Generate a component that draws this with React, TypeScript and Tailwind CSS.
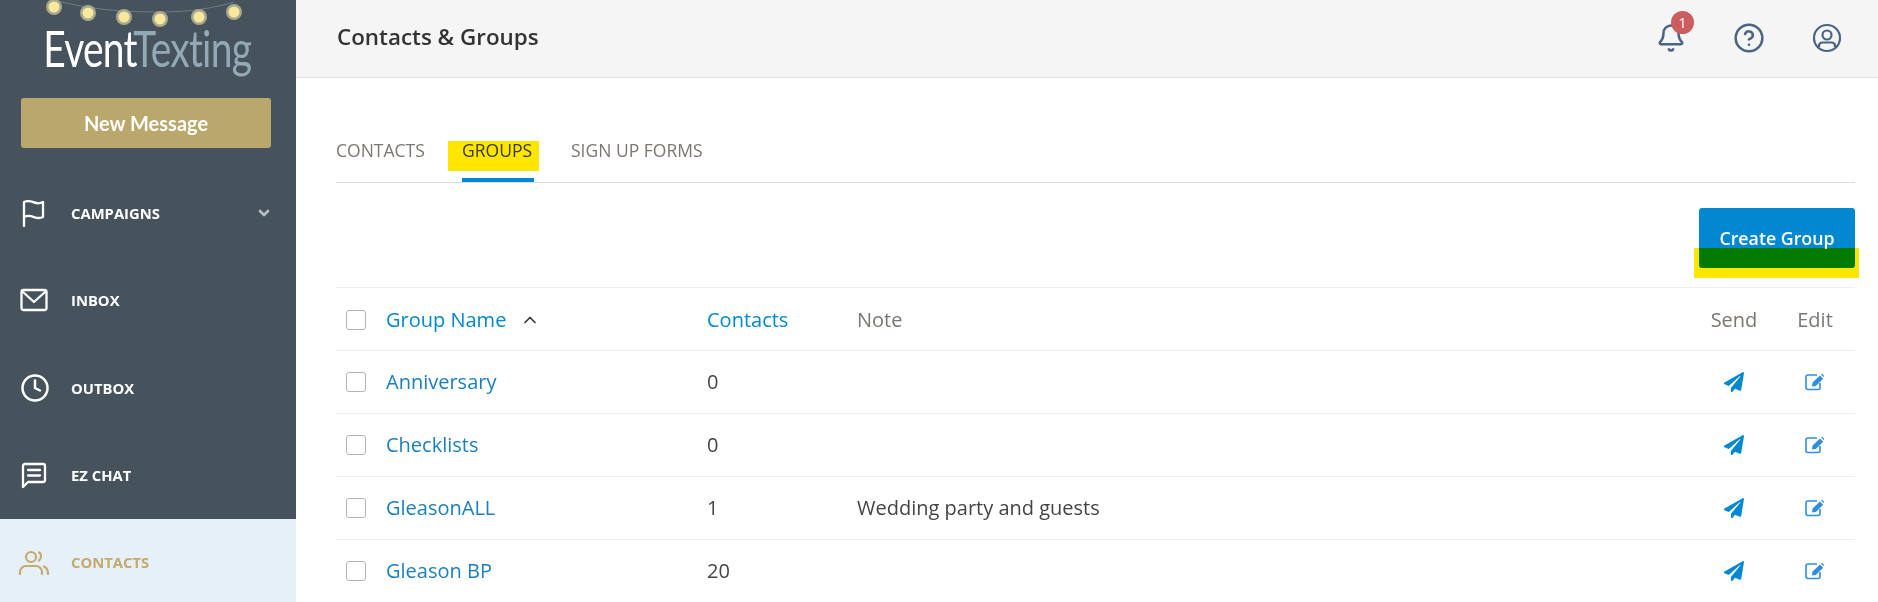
import React from 'react'
import { Bell, ChevronDown, ChevronUp, CircleHelp, Clock } from 'lucide-react'
import { FaPaperPlane } from 'react-icons/fa'

const openSans = { fontFamily: '"Open Sans", sans-serif' }

const FlagIcon = () => (
  <svg width="28" height="28" viewBox="0 0 28 28" fill="none" stroke="currentColor" strokeWidth="2.300" strokeLinecap="round" strokeLinejoin="round">
    <path d="M4 27V3c3-1.600 6-1.200 10 .4 3 1.200 6 1.400 9-.4v15c-3 1.400-6 1.300-9 .1-4-1.600-7-1.700-10-.1" />
  </svg>
)

const MailIcon = () => (
  <svg width="28" height="24" viewBox="0 0 28 24" fill="none" stroke="currentColor" strokeWidth="2.300" strokeLinecap="round" strokeLinejoin="round">
    <rect x="1.500" y="2" width="25" height="20" rx="2" />
    <path d="M3 4l11 10L25 4" />
  </svg>
)

const ChatIcon = () => (
  <svg width="28" height="28" viewBox="0 0 28 28" fill="none" stroke="currentColor" strokeWidth="2.300" strokeLinecap="round" strokeLinejoin="round">
    <path d="M3 26V5a2 2 0 0 1 2-2h18a2 2 0 0 1 2 2v14a2 2 0 0 1-2 2H8z" />
    <path d="M8 9h12M8 14.500h12" />
  </svg>
)

const ContactsIcon = () => (
  <svg width="32" height="28" viewBox="0 0 32 28" fill="none" stroke="currentColor" strokeWidth="2.200" strokeLinecap="round">
    <circle cx="13" cy="8" r="5" />
    <path d="M2 25v-2c0-3.500 3-6 6-6h10c3 0 6 2.500 6 6v2" />
    <path d="M21 3.500c2.600.8 2.600 6.200 0 8" />
    <path d="M26 17.500c2 .9 4 2.800 4 7.500" />
  </svg>
)

const UserCircleIcon = () => (
  <svg width="30" height="30" viewBox="0 0 30 30" fill="none" stroke="currentColor" strokeWidth="2.200">
    <circle cx="15" cy="15" r="13" />
    <circle cx="15" cy="12" r="4.500" />
    <path d="M7 24v-1c0-2 1.500-3.500 3.500-3.500h9c2 0 3.500 1.500 3.500 3.500v1" />
  </svg>
)

const EditIcon = () => (
  <svg width="20" height="18" viewBox="0 0 20 18" fill="none">
    <path d="M15 10v4.500a2 2 0 0 1-2 2H3a2 2 0 0 1-2-2V4a2 2 0 0 1 2-2h9" stroke="#2f8fdc" strokeWidth="1.600" />
    <path d="M7.500 9.500 15 2.500l3.200 3.300-7.300 7.200-3.900.6zM16 1.500l1-.8 2.300 2.300-.9 1.100z" fill="#2f8fdc" />
  </svg>
)

const bulbs = [
  [8, 7],
  [42, 13],
  [78, 17],
  [114, 19],
  [153, 17],
  [188, 12],
]

const LogoLights = () => (
  <svg width="200" height="30" viewBox="0 0 200 30" fill="none">
    <path d="M8 0c30 8 60 12 106 12 30 0 54-4 74-10" stroke="#6f7a82" strokeWidth="1" />
    {bulbs.map(([x, y]) => (
      <g key={x}>
        <circle cx={x} cy={y} r="8" fill="#a9a98a" />
        <circle cx={x} cy={y} r="5.500" fill="#f4e9a8" />
        <circle cx={x} cy={y} r="3" fill="#ffe88f" />
      </g>
    ))}
  </svg>
)

const NavItem = ({ icon, label, chevron }: { icon: React.ReactNode; label: string; chevron?: boolean }) => (
  <div className="h-[87.5px] flex items-center pl-[20px] pr-[24px] text-white">
    <div className="w-[51px] flex items-center">{icon}</div>
    <span className="text-[14.800px] font-bold flex-1">{label}</span>
    {chevron && <ChevronDown size={16} strokeWidth={4} className="text-[#b5bfc6]" />}
  </div>
)

const groups = [
  { name: 'Anniversary', contacts: 0, note: '' },
  { name: 'Checklists', contacts: 0, note: '' },
  { name: 'GleasonALL', contacts: 1, note: 'Wedding party and guests' },
  { name: 'Gleason BP', contacts: 20, note: '' },
]

const Checkbox = () => <div className="w-5 h-5 ml-[10px] mr-5 rounded-[3px] border border-[#b3b3b3] bg-white shrink-0" />

const App = () => {
  return (
    <div className="flex h-screen overflow-hidden bg-white text-[#444]" style={openSans}>
      {/* Sidebar */}
      <aside className="w-[296px] shrink-0 bg-[#47535c] flex flex-col">
        <div className="h-[98px] flex flex-col items-center relative">
          <div className="absolute left-[46px] top-0">
            <LogoLights />
          </div>
          <div
            className="mt-[19px] ml-[-1px] font-normal text-[50px] leading-[58px] scale-x-[.78] whitespace-nowrap tracking-[-0.02em]"
            style={{ fontFamily: 'Lato, sans-serif' }}
          >
            <span className="text-white">Event</span>
            <span className="text-[#93a9b6]">Texting</span>
          </div>
        </div>
        <div className="ml-[21px] w-[250px] h-[50px] rounded-[3px] bg-[#b9a76b] flex items-center justify-center text-white text-[20px] font-bold" style={{ fontFamily: 'Lato, sans-serif' }}>
          New Message
        </div>
        <nav className="mt-[21px]">
          <NavItem icon={<FlagIcon />} label="CAMPAIGNS" chevron />
          <NavItem icon={<MailIcon />} label="INBOX" />
          <NavItem icon={<Clock size={30} strokeWidth={2} />} label="OUTBOX" />
          <NavItem icon={<ChatIcon />} label="EZ CHAT" />
        </nav>
        <div className="flex-1 bg-[#e5f0f9] flex items-center pl-[18px] pt-[4px] text-[#c4aa6e]">
          <div className="w-[53px] flex items-center">
            <ContactsIcon />
          </div>
          <span className="text-[14.800px] font-bold">CONTACTS</span>
        </div>
      </aside>

      {/* Main */}
      <div className="flex-1 min-w-0 flex flex-col">
        <header className="h-[78px] shrink-0 bg-[#f5f5f5] border-b border-[#e3e3e3] flex items-center pl-[41px] pr-[36px]">
          <h1 className="flex-1 text-[22.400px] font-semibold text-[#333] -mt-[3px]">Contacts &amp; Groups</h1>
          <div className="flex items-center text-[#4a6484] -mt-[2px]">
            <div className="relative mr-[47px]">
              <Bell size={30} strokeWidth={2} />
              <span className="absolute -top-[12px] left-[15px] w-[23px] h-[23px] rounded-full bg-[#cd5c5f] text-white text-[15px] flex items-center justify-center">
                1
              </span>
            </div>
            <CircleHelp size={32} strokeWidth={1.9} className="mr-[47px]" />
            <UserCircleIcon />
          </div>
        </header>

        <main className="pl-10 pr-[23px]">
          {/* Tabs */}
          <div className="mt-[50px] h-[55px] border-b border-[#dddddd] flex text-[17.500px] text-[#7d7672]">
            <div className="w-[126px] pt-[9px]">CONTACTS</div>
            <div className="relative w-[109px] pt-[9px]">
              <span className="absolute left-[-14px] top-[13px] w-[91px] h-[30px] bg-[#ffe600]" />
              <span className="relative text-[#3a3a10]">GROUPS</span>
              <span className="absolute left-0 bottom-0 w-[72px] h-1 bg-[#0288d1]" />
            </div>
            <div className="pt-[9px]">SIGN UP FORMS</div>
          </div>

          {/* Toolbar */}
          <div className="h-[104px] flex justify-end pt-[25px]">
            <div className="relative w-[156px] h-[60px]">
              <button className="w-full h-full pt-[1px] rounded-[3px] bg-[#0288d1] text-white text-[17.800px] font-semibold">
                Create Group
              </button>
              <span className="absolute -left-[5px] top-10 w-[165px] h-[30px] bg-[#ffe600] mix-blend-multiply" />
            </div>
          </div>

          {/* Table */}
          <div className="h-[63px] pt-[1px] border-t border-[#eeeeee] flex items-center text-[20px]">
            <Checkbox />
            <div className="w-[321px] flex items-center text-[#0288d1]">
              Group Name
              <ChevronUp size={20} className="ml-[14px] text-[#333]" />
            </div>
            <div className="w-[150px] text-[#0288d1]">Contacts</div>
            <div className="flex-1 text-[#7d7672]">Note</div>
            <div className="w-[82px] text-center text-[#7d7672]">Send</div>
            <div className="w-[80px] text-center text-[#7d7672]">Edit</div>
          </div>
          {groups.map((group) => (
            <div key={group.name} className="h-[63px] border-t border-[#eeeeee] flex items-center text-[20px]">
              <Checkbox />
              <div className="w-[321px] text-[#1a7fc1]">{group.name}</div>
              <div className="w-[150px]">{group.contacts}</div>
              <div className="flex-1">{group.note}</div>
              <div className="w-[82px] flex justify-center text-[#0288d1]">
                <FaPaperPlane size={20} />
              </div>
              <div className="w-[80px] flex justify-center">
                <EditIcon />
              </div>
            </div>
          ))}
        </main>
      </div>
    </div>
  )
}

export default App
